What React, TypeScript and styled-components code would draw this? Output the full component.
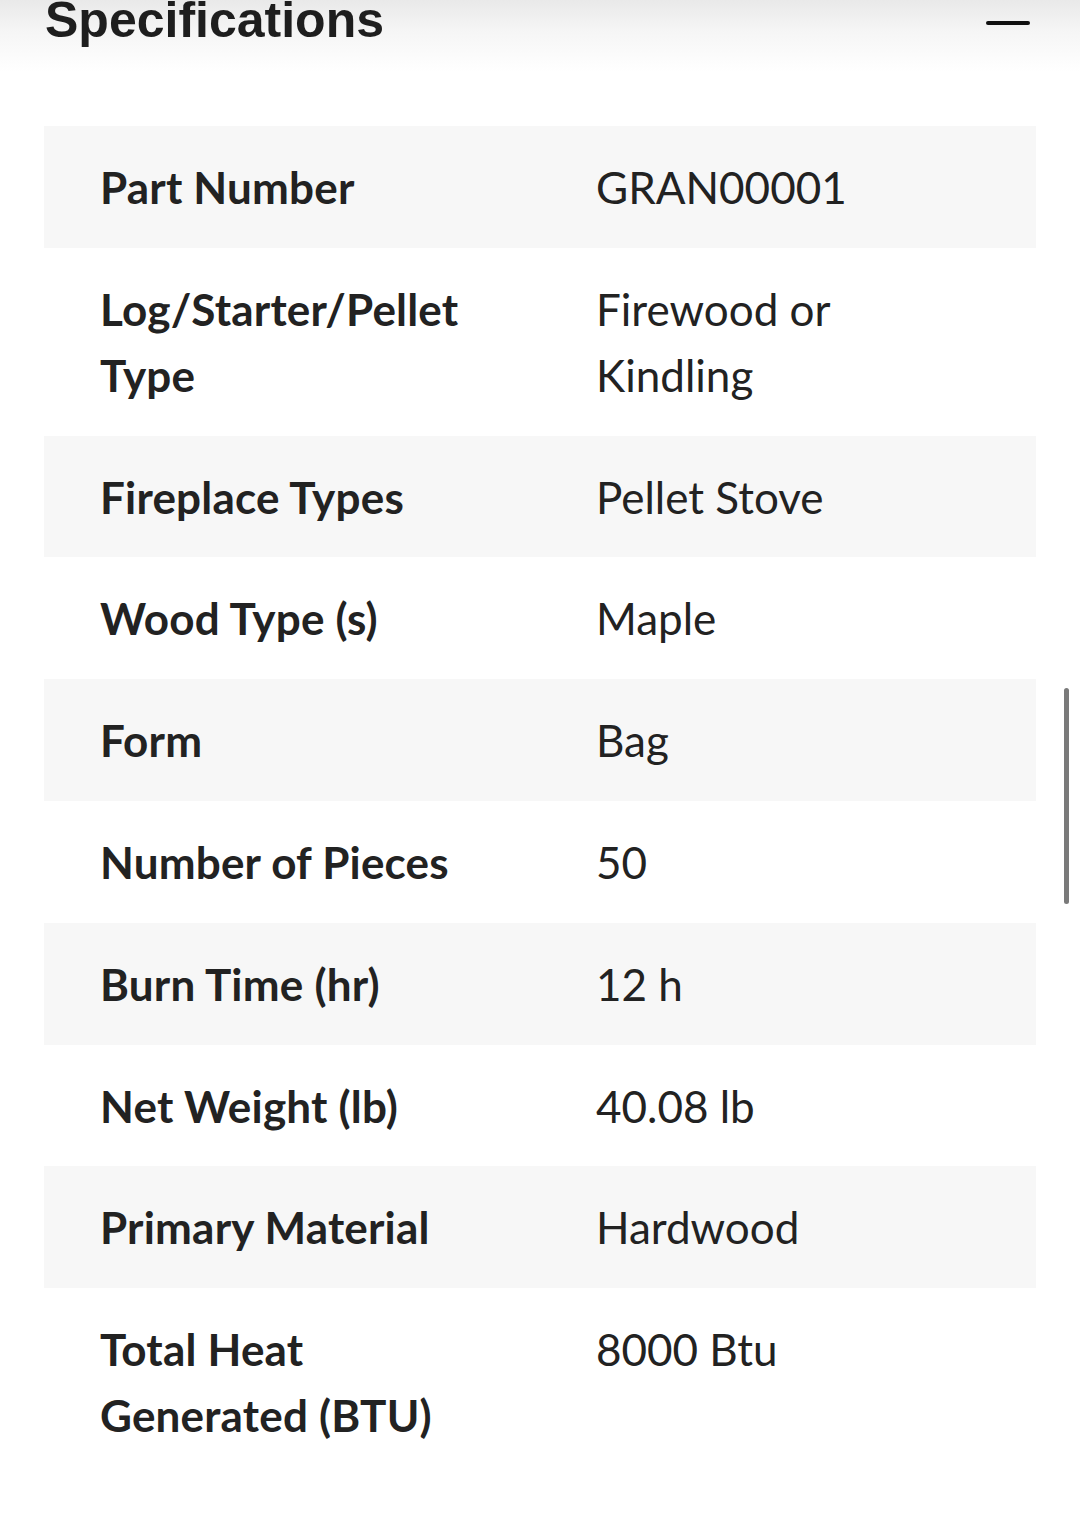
import React from "react";
import styled, { createGlobalStyle } from "styled-components";

const GlobalStyle = createGlobalStyle`
  html, body {
    margin: 0;
    padding: 0;
    background: #fff;
  }
  body {
    font-family: Lato, "Open Sans", sans-serif;
    color: #222;
  }
`;

const Page = styled.div`
  position: relative;
  width: 1080px;
  min-height: 1533px;
  overflow: hidden;
`;

const Header = styled.header`
  height: 72px;
  padding: 0 50px 0 45px;
  display: flex;
  justify-content: space-between;
  align-items: flex-start;
  background: linear-gradient(to bottom, #e9e9e9 0%, #f6f6f6 45%, #ffffff 100%);
`;

const Title = styled.h2`
  margin: -5px 0 0 0;
  font-family: "Liberation Sans", Arial, sans-serif;
  font-weight: 700;
  font-size: 50px;
  line-height: 50px;
  color: #1e1e1e;
`;

const Collapse = styled.button`
  margin-top: 21px;
  width: 44px;
  height: 4px;
  padding: 0;
  border: none;
  border-radius: 2px;
  background: #111;
`;

const Table = styled.div`
  margin: 54px 44px 0 44px;
  display: flex;
  flex-direction: column;
`;

const Row = styled.div<{ $shaded: boolean }>`
  display: grid;
  grid-template-columns: 1fr 1fr;
  padding: 28px 0 27.8px;
  background: ${(p) => (p.$shaded ? "#f7f7f7" : "#fff")};
`;

const Label = styled.div`
  padding: 0 40px 0 56px;
  font-size: 44px;
  line-height: 66px;
  font-weight: 700;
  letter-spacing: 0.2px;
  color: #222;
`;

const Value = styled.div`
  padding: 0 40px 0 56px;
  font-size: 44px;
  line-height: 66px;
  font-weight: 400;
  color: #222;
`;

const Scrollbar = styled.div`
  position: absolute;
  top: 688px;
  right: 11px;
  width: 5px;
  height: 216px;
  border-radius: 3px;
  background: #7a7a7a;
`;

const specs: [string, string][] = [
  ["Part Number", "GRAN00001"],
  ["Log/Starter/Pellet Type", "Firewood or Kindling"],
  ["Fireplace Types", "Pellet Stove"],
  ["Wood Type (s)", "Maple"],
  ["Form", "Bag"],
  ["Number of Pieces", "50"],
  ["Burn Time (hr)", "12 h"],
  ["Net Weight (lb)", "40.08 lb"],
  ["Primary Material", "Hardwood"],
  ["Total Heat Generated (BTU)", "8000 Btu"],
];

const App: React.FC = () => {
  return (
    <Page>
      <GlobalStyle />
      <Header>
        <Title>Specifications</Title>
        <Collapse aria-label="Collapse" />
      </Header>
      <Table>
        {specs.map(([label, value], i) => (
          <Row key={label} $shaded={i % 2 === 0}>
            <Label>{label}</Label>
            <Value>{value}</Value>
          </Row>
        ))}
      </Table>
      <Scrollbar />
    </Page>
  );
};

export default App;
